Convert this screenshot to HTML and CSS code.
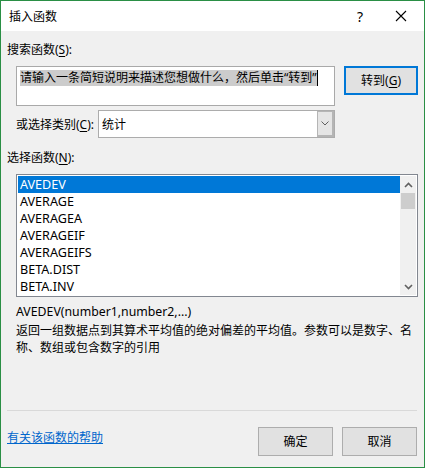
FILE: index.html
```html
<!DOCTYPE html>
<html lang="zh-CN">
<head>
<meta charset="utf-8">
<link rel="stylesheet" href="styles.css">
</head>
<body>
<div class="window">
  <div class="titlebar">
    <span class="title">插入函数</span>
    <span class="help">?</span>
    <svg class="close" width="12" height="12" viewBox="0 0 12 12"><path d="M1 1L11 11M11 1L1 11" stroke="#000" stroke-width="1.1" fill="none"/></svg>
  </div>
  <div class="content">
    <div class="label first">搜索函数(<u>S</u>):</div>
    <div class="search-row">
      <div class="textbox"><span class="sel">请输入一条简短说明来描述您想做什么，然后单击“转到”</span><span class="caret"></span></div>
      <div class="btn go">转到(<u>G</u>)</div>
    </div>
    <div class="cat-row">
      <span class="cat-label">或选择类别(<u>C</u>):</span>
      <div class="select">
        <span class="select-text">统计</span>
        <span class="drop"><svg width="8" height="5" viewBox="0 0 8 5"><path d="M0.5 0.5L4 4L7.5 0.5" stroke="#606060" stroke-width="1" fill="none"/></svg></span>
      </div>
    </div>
    <div class="label second">选择函数(<u>N</u>):</div>
    <div class="listbox">
      <div class="items">
        <div class="item active">AVEDEV</div>
        <div class="item">AVERAGE</div>
        <div class="item">AVERAGEA</div>
        <div class="item">AVERAGEIF</div>
        <div class="item">AVERAGEIFS</div>
        <div class="item">BETA.DIST</div>
        <div class="item">BETA.INV</div>
      </div>
      <div class="scrollbar">
        <span class="arrow"><svg width="9" height="6" viewBox="0 0 9 6"><path d="M1 5L4.5 1.5L8 5" stroke="#606060" stroke-width="1.6" fill="none"/></svg></span>
        <span class="thumb"></span>
        <span class="track"></span>
        <span class="arrow"><svg width="9" height="6" viewBox="0 0 9 6"><path d="M1 1L4.5 4.5L8 1" stroke="#606060" stroke-width="1.6" fill="none"/></svg></span>
      </div>
    </div>
    <div class="signature">AVEDEV(number1,number2,...)</div>
    <div class="desc">返回一组数据点到其算术平均值的绝对偏差的平均值。参数可以是数字、名称、数组或包含数字的引用</div>
    <div class="spacer"></div>
    <div class="separator"></div>
    <div class="footer">
      <a class="helplink" href="#">有关该函数的帮助</a>
      <div class="buttons">
        <div class="btn wide">确定</div>
        <div class="btn wide">取消</div>
      </div>
    </div>
  </div>
</div>
</body>
</html>
```
FILE: styles.css
```css
html, body {
  margin: 0;
  padding: 0;
}
body {
  font-family: "Segoe UI", "Noto Sans", "Noto Sans CJK SC", sans-serif;
  font-size: 12px;
  color: #000;
  background: #f0f0f0;
}
u {
  text-decoration: underline;
  text-underline-offset: 2px;
}
.window {
  width: 425px;
  height: 468px;
  box-sizing: border-box;
  border: 1px solid #2a8f45;
  display: flex;
  flex-direction: column;
  background: #f0f0f0;
}
.titlebar {
  height: 30px;
  background: #fff;
  display: flex;
  align-items: center;
  padding-left: 8px;
  flex-shrink: 0;
}
.title {
  flex: 1;
  line-height: 17px;
}
.help {
  font-family: "Segoe UI", "Noto Sans", sans-serif;
  font-size: 14px;
  margin-right: 32px;
  line-height: 17px;
}
.close {
  margin-right: 17px;
}
.content {
  flex: 1;
  display: flex;
  flex-direction: column;
  padding: 0 6px 0 6px;
}
.label {
  line-height: 17px;
  height: 17px;
}
.label.first {
  margin-top: 10px;
}
.search-row {
  display: flex;
  align-items: flex-start;
  margin-top: 8px;
  margin-left: 9px;
  gap: 9px;
}
.textbox {
  width: 319px;
  height: 40px;
  box-sizing: border-box;
  border: 1px solid #a9a9a9;
  background: #fff;
  padding: 3px 0 0 3px;
  display: flex;
  align-items: flex-start;
}
.sel {
  background: #cccccc;
  line-height: 16px;
  white-space: nowrap;
}
.caret {
  width: 1px;
  height: 16px;
  background: #000;
}
.btn {
  width: 74px;
  height: 29px;
  box-sizing: border-box;
  border: 1px solid #adadad;
  background: #e1e1e1;
  display: flex;
  align-items: center;
  justify-content: center;
  line-height: 17px;
}
.btn.wide {
  width: 75px;
}
.btn.go {
  border: 2px solid #0078d7;
}
.cat-row {
  display: flex;
  align-items: center;
  margin-top: 4px;
  margin-left: 9px;
}
.cat-label {
  width: 82px;
  line-height: 17px;
}
.select {
  width: 237px;
  height: 28px;
  box-sizing: border-box;
  border: 1px solid #acacac;
  background: #fff;
  display: flex;
  align-items: stretch;
}
.select-text {
  flex: 1;
  padding-left: 3px;
  display: flex;
  align-items: center;
}
.drop {
  width: 17px;
  box-sizing: border-box;
  border: 1px solid #b5b5b5;
  border-right-width: 2px;
  border-bottom-width: 2px;
  background: #e5e5e5;
  display: flex;
  align-items: center;
  justify-content: center;
}
.label.second {
  margin-top: 11px;
}
.listbox {
  margin-top: 8px;
  margin-left: 9px;
  width: 402px;
  height: 123px;
  box-sizing: border-box;
  border: 1px solid #828790;
  background: #fff;
  padding: 1px;
  display: flex;
}
.items {
  flex: 1;
}
.item {
  height: 17px;
  line-height: 17px;
  padding-left: 2px;
  font-size: 12.6px;
}
.item.active {
  background: #0078d7;
  color: #fff;
}
.scrollbar {
  width: 16px;
  background: #f0f0f0;
  display: flex;
  flex-direction: column;
  align-items: center;
}
.arrow {
  height: 17px;
  display: flex;
  align-items: center;
  justify-content: center;
}
.thumb {
  width: 14px;
  height: 16px;
  background: #cdcdcd;
}
.track {
  flex: 1;
}
.signature {
  margin-top: 6px;
  margin-left: 9px;
  line-height: 17px;
  font-size: 12.3px;
}
.desc {
  margin-top: 2px;
  margin-left: 9px;
  width: 402px;
  line-height: 17px;
}
.spacer {
  flex: 1;
}
.separator {
  height: 1px;
  background: #d9d9d9;
  margin-right: 1px;
}
.footer {
  display: flex;
  align-items: center;
  justify-content: space-between;
  margin-top: 16px;
  margin-bottom: 11px;
}
.helplink {
  color: #0066cc;
  text-decoration: underline;
  line-height: 17px;
  margin-top: -8px;
}
.buttons {
  display: flex;
  gap: 9px;
  margin-right: 1px;
}
```
